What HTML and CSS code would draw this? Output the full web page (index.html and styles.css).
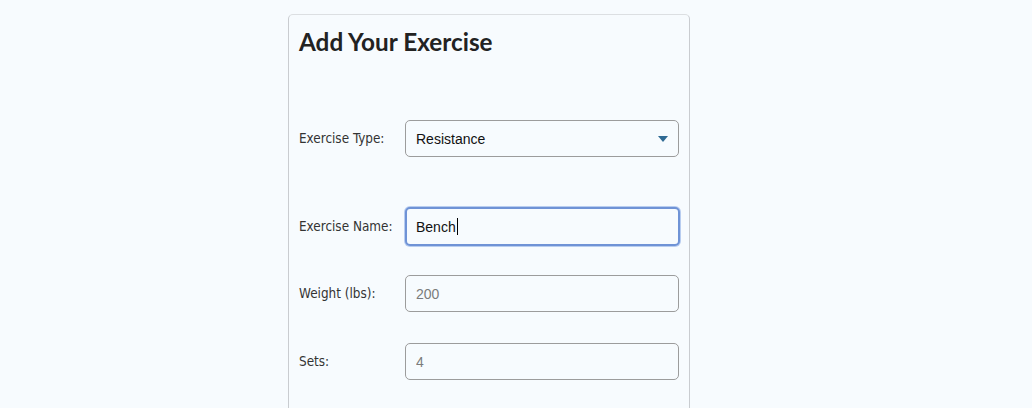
FILE: index.html
```html
<!DOCTYPE html>
<html>
<head>
<meta charset="utf-8">
<link rel="stylesheet" href="styles.css">
</head>
<body>
<div class="card">
  <h1 class="title">Add Your Exercise</h1>
  <div class="row row-type">
    <label class="label">Exercise Type:</label>
    <div class="select">
      <span class="select-text">Resistance</span>
      <svg class="arrow" width="10" height="6" viewBox="0 0 10 6"><path d="M0 0H10L5 6Z" fill="#2f6a93"/></svg>
    </div>
  </div>
  <div class="row row-name">
    <label class="label">Exercise Name:</label>
    <div class="field focused"><span>Bench</span><span class="caret"></span></div>
  </div>
  <div class="row row-weight">
    <label class="label">Weight (lbs):</label>
    <input class="field" placeholder="200">
  </div>
  <div class="row row-sets">
    <label class="label">Sets:</label>
    <input class="field" placeholder="4">
  </div>
</div>
</body>
</html>
```
FILE: styles.css
```css
html, body {
  margin: 0;
  padding: 0;
  background: #f7fbfe;
}
body {
  height: 408px;
  overflow: hidden;
}
.card {
  margin-left: 288px;
  margin-top: 14px;
  width: 402px;
  height: 394px;
  border: 1px solid #c9ccd0;
  border-top-color: #dcdfe2;
  border-bottom: 0;
  border-radius: 5px 5px 0 0;
  box-sizing: border-box;
  padding: 0 10px;
}
.title {
  margin: 13px 0 0 0;
  font-family: Lato, sans-serif;
  font-weight: 700;
  font-size: 24.3px;
  line-height: 28px;
  color: #222;
}
.row {
  display: flex;
  align-items: center;
}
.row-type { margin-top: 64px; }
.row-name { margin-top: 50px; }
.row-weight { margin-top: 29px; }
.row-sets { margin-top: 31px; }
.label {
  width: 106px;
  flex: none;
  font-family: "DejaVu Sans Condensed", "DejaVu Sans", sans-serif;
  font-size: 13.4px;
  color: #333;
}
.select, .field {
  width: 274px;
  height: 37px;
  flex: none;
  box-sizing: border-box;
  border: 1px solid #9c9c9c;
  border-radius: 5px;
  background: #f7fbfe;
  font-family: "Liberation Sans", Arial, sans-serif;
  font-size: 14px;
  color: #111;
  padding: 0 10px;
  display: flex;
  align-items: center;
}
.select {
  justify-content: space-between;
  padding-right: 10px;
}
.arrow { display: block; margin-top: 1px; }
.field::placeholder { color: #7b7b7b; }
input.field { outline: none; }
.focused {
  height: 39px;
  width: 275px;
  border: 2px solid #6f93d6;
  box-shadow: 0 0 0 1px #b8cdf0;
  padding-left: 9px;
}
.caret {
  display: inline-block;
  width: 1px;
  height: 17px;
  background: #000;
  margin-left: 1px;
}
```
